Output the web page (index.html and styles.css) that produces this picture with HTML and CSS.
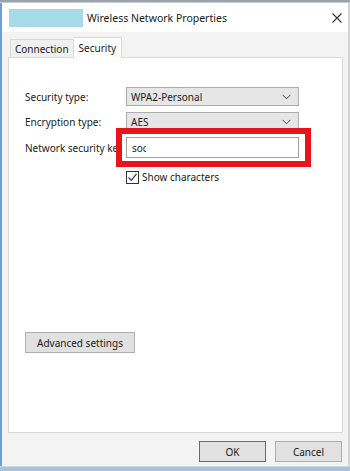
FILE: index.html
```html
<!DOCTYPE html>
<html lang="en">
  <head>
    <meta charset="UTF-8" />
    <title>Wireless Network Properties</title>
    <link rel="stylesheet" href="styles.css">
  </head>
  <body>
    <div class="backdrop"></div>
    <div class="window">
      <div class="titlebar">
        <div class="title-icon"></div>
        <span class="title-text">Wireless Network Properties</span>
        <svg class="close" width="10" height="10" viewBox="0 0 10 10">
          <path d="M0.5 0.5 L9.5 9.5 M9.5 0.5 L0.5 9.5" stroke="#333" stroke-width="1.1" fill="none" />
        </svg>
      </div>
      <div class="client">
        <div class="tabs">
          <div class="tab">Connection</div>
          <div class="tab active">Security</div>
        </div>
        <div class="panel">
          <div class="form">
            <div class="row">
              <span class="label">Security type:</span>
              <div class="select">WPA2-Personal
                <svg width="9" height="6" viewBox="0 0 9 6"><path d="M0.5 0.8 L4.5 4.8 L8.5 0.8" stroke="#444" fill="none" /></svg>
              </div>
            </div>
            <div class="row">
              <span class="label">Encryption type:</span>
              <div class="select">AES
                <svg width="9" height="6" viewBox="0 0 9 6"><path d="M0.5 0.8 L4.5 4.8 L8.5 0.8" stroke="#444" fill="none" /></svg>
              </div>
            </div>
            <div class="row key-row">
              <span class="label label-clip">Network security key</span>
              <div class="highlight">
                <div class="input">so<span class="cut">c</span></div>
              </div>
            </div>
            <label class="check-row">
              <span class="checkbox">
                <svg width="11" height="11" viewBox="0 0 11 11"><path d="M1.5 5.5 L4.3 8.3 L9.5 1.8" stroke="#333" stroke-width="1.2" fill="none" /></svg>
              </span>
              Show characters
            </label>
          </div>
          <div class="advanced">
            <button class="btn">Advanced settings</button>
          </div>
        </div>
        <div class="footer">
          <button class="btn btn-default">OK</button>
          <button class="btn">Cancel</button>
        </div>
      </div>
    </div>
    <div class="taskbar"></div>
  </body>
</html>
```

FILE: styles.css
```css
* {
  box-sizing: border-box;
  margin: 0;
  padding: 0;
}

body {
  width: 350px;
  height: 471px;
  overflow: hidden;
  font-family: "Noto Sans", "Liberation Sans", sans-serif;
  font-size: 10px;
  color: #1a1a1a;
  background: #f0f0f0;
  display: flex;
  flex-direction: column;
}

.backdrop {
  height: 3px;
  background: #9aa3ab;
  border-bottom: 1px solid #c9ced3;
}

.window {
  flex: 1;
  display: flex;
  flex-direction: column;
  border-left: 2px solid #6e9fd6;
  border-right: 2px solid #d4d4d4;
}

.titlebar {
  height: 29px;
  background: #fff;
  display: flex;
  align-items: center;
  padding: 0 6px 0 7px;
}

.title-icon {
  width: 74px;
  height: 18px;
  background: #a5dbe9;
}

.title-text {
  margin-left: 4px;
  font-size: 10.5px;
  flex: 1;
}

.client {
  flex: 1;
  display: flex;
  flex-direction: column;
  padding: 4px 5px 0 6px;
  background: #f3f3f3;
}

.tabs {
  display: flex;
  align-items: flex-end;
  height: 21px;
  padding-left: 2px;
}

.tab {
  height: 18px;
  padding: 0 4px;
  border: 1px solid #d9d9d9;
  border-bottom: 0;
  background: #f0f0f0;
  display: flex;
  align-items: center;
}

.tab.active {
  height: 21px;
  background: #fff;
  border-left: 0;
  padding: 0 5px;
  position: relative;
  top: 1px;
}

.panel {
  height: 376px;
  background: #fff;
  border: 1px solid #d9d9d9;
  display: flex;
  flex-direction: column;
  padding: 29px 0 0 16px;
}

.form {
  display: flex;
  flex-direction: column;
  gap: 6px;
}

.row {
  display: flex;
  align-items: center;
}

.label {
  width: 101px;
  white-space: nowrap;
}

.label-clip {
  width: 91px;
  overflow: hidden;
}

.select {
  width: 173px;
  height: 19px;
  background: #e6e6e6;
  border: 1px solid #adadad;
  display: flex;
  align-items: center;
  justify-content: space-between;
  padding: 0 7px 0 4px;
}

.key-row {
  margin-top: -9px;
}

.highlight {
  border: 6px solid #e8141b;
  padding: 3px 6px 3px 4px;
}

.input {
  width: 173px;
  height: 21px;
  border: 1px solid #a0a0a0;
  background: #fff;
  display: flex;
  align-items: center;
  padding-left: 5px;
}

.cut {
  display: inline-block;
  width: 3px;
  overflow: hidden;
}

.check-row {
  display: flex;
  align-items: center;
  gap: 3px;
  margin: -3px 0 0 101px;
}

.checkbox {
  width: 13px;
  height: 13px;
  border: 1px solid #333;
  display: flex;
  align-items: center;
  justify-content: center;
}

.advanced {
  margin-top: auto;
  padding-bottom: 79px;
}

.btn {
  font-family: inherit;
  font-size: 10px;
  color: #1a1a1a;
  background: #e1e1e1;
  border: 1px solid #adadad;
  height: 21px;
  width: 67px;
}

.advanced .btn {
  width: 110px;
}

.btn-default {
  border-color: #2f78c8;
}

.footer {
  display: flex;
  justify-content: flex-end;
  gap: 9px;
  padding: 8px 1px 0 0;
}

.taskbar {
  height: 5px;
  background: #a7c1dc;
  border-top: 1px solid #c9d6e3;
}
```
